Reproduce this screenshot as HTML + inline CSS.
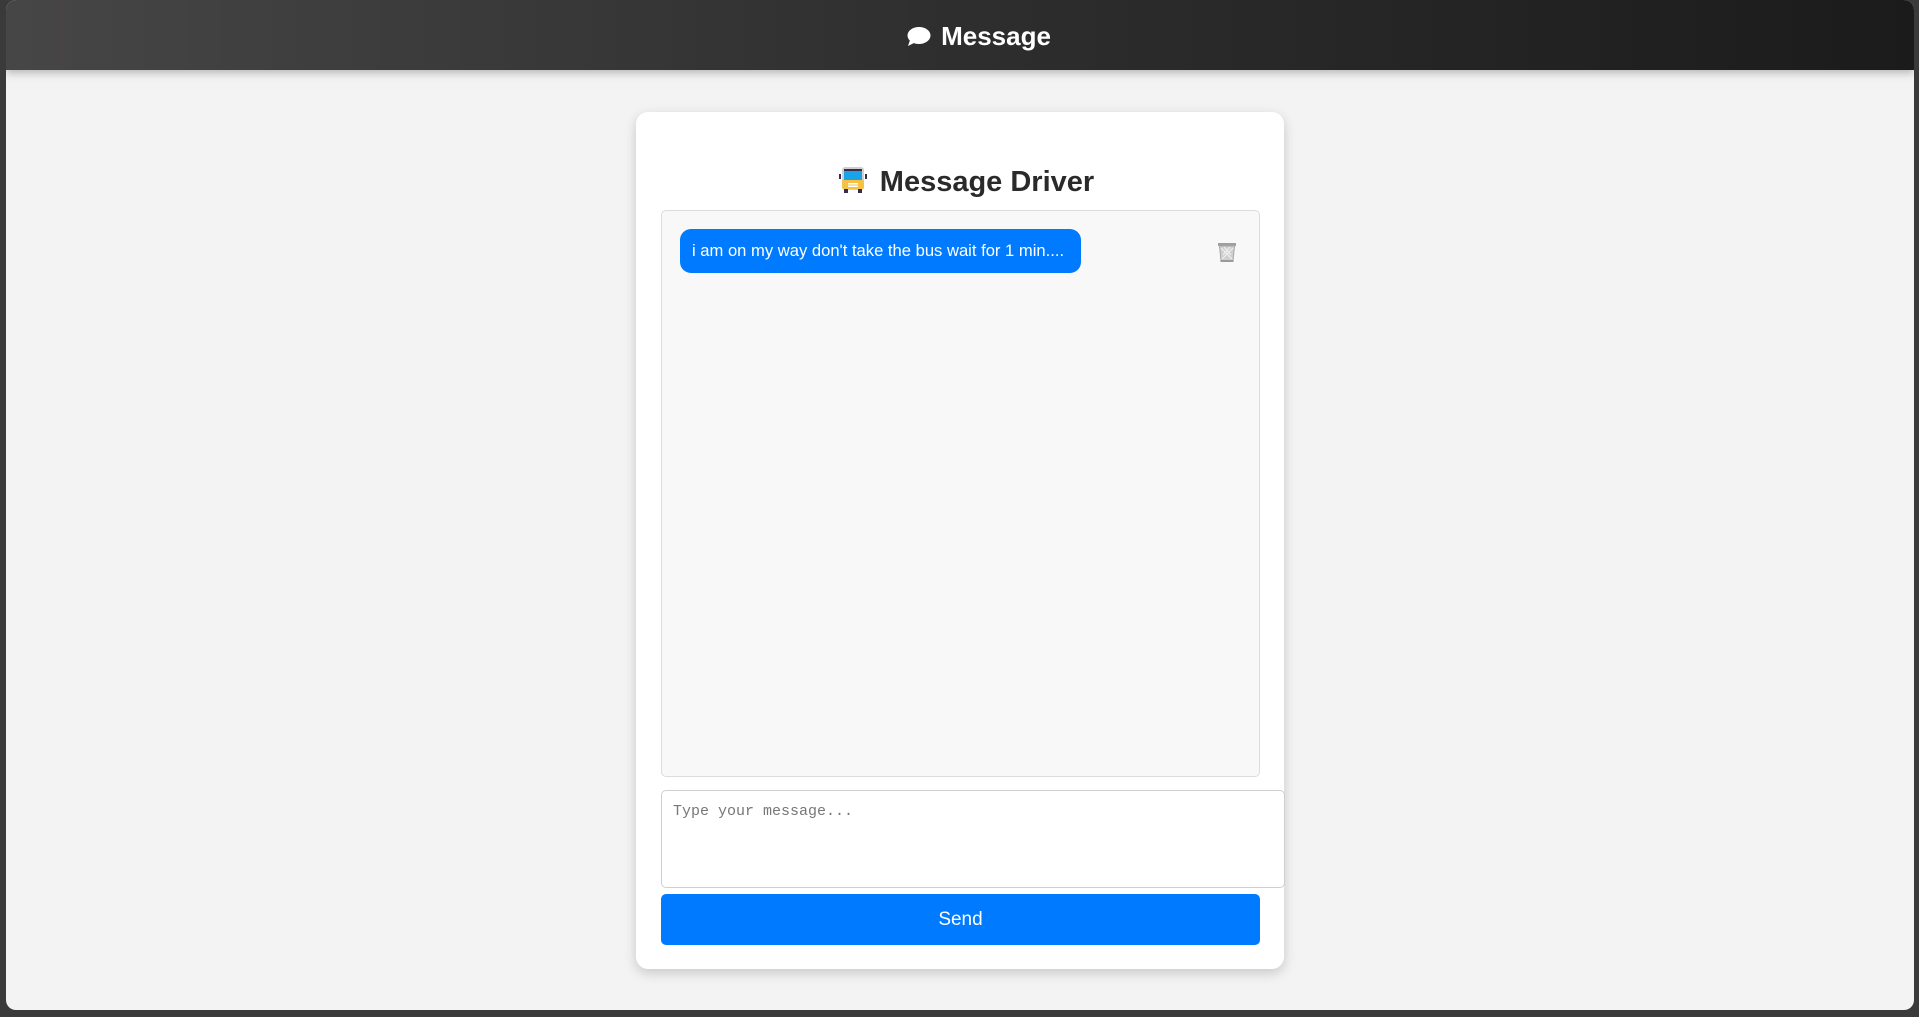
<!DOCTYPE html>
<html><head><meta charset="utf-8"><style>
html,body{margin:0;padding:0;width:1919px;height:1017px;overflow:hidden;background:#3a3a3a;font-family:"Liberation Sans",Arial,sans-serif}
.frame{position:absolute;left:6px;top:0;width:1908px;height:1010px;background:#f3f3f3;border-radius:10px;overflow:hidden}
.hdr{position:absolute;left:0;top:0;width:100%;height:70px;background:linear-gradient(90deg,#474646,#2e2e2e 50%,#1b1b1b);box-shadow:0 3px 8px rgba(0,0,0,.25);color:#fff;font-weight:bold;font-size:26px;text-align:center;line-height:72px;box-sizing:border-box;padding-left:36px}
.card{position:absolute;left:630px;top:112px;width:648px;height:857px;background:#fff;border-radius:12px;box-shadow:0 4px 12px rgba(0,0,0,.18)}
.box{position:absolute;left:25px;top:98px;width:597px;height:565px;border:1px solid #dcdcdc;border-radius:5px;background:#f8f8f8}
.bub{position:absolute;left:18px;top:18px;width:401px;height:44px;background:#007bff;border-radius:11px;color:#fff;font-size:16.6px;line-height:44px;box-sizing:border-box;padding-left:12px;white-space:nowrap}
.ta{position:absolute;left:25px;top:678px;width:624px;height:98px;border:1px solid #cfcfcf;border-radius:5px;background:#fff;font-family:"Liberation Mono",monospace;font-size:15px;color:#777;box-sizing:border-box;padding:12px 11px}
.btn{position:absolute;left:25px;top:782px;width:599px;height:51px;background:#007bff;border-radius:5px;color:#fff;font-size:19px;text-align:center;line-height:51px}
</style></head><body>
<div class="frame">
<div class="hdr"><svg width="26" height="22" viewBox="0 0 26 22" style="vertical-align:-3px;margin-right:10px"><ellipse cx="14" cy="9.5" rx="11.5" ry="8.5" fill="#fff"/><path d="M5 14 L3 20 L11 16 Z" fill="#fff"/></svg>Message</div>
<div class="card">
<div style="position:absolute;left:6px;top:52px;width:100%;text-align:center;font-size:29px;font-weight:bold;color:#2a2a2a;line-height:36px">
<svg width="30" height="28" viewBox="0 0 30 28" style="vertical-align:-3px;margin-right:12px"><rect x="1" y="8" width="2" height="5" fill="#3b2a4a"/><rect x="27" y="8" width="2" height="5" fill="#3b2a4a"/><rect x="4" y="1" width="22" height="23" rx="3" fill="#cfd0d4"/><rect x="6" y="3" width="18" height="2" fill="#3b2a4a"/><rect x="6" y="5" width="18" height="9" fill="#1aa3e8"/><rect x="4" y="14" width="22" height="9" rx="2" fill="#f6c244"/><rect x="10" y="17" width="10" height="1.5" fill="#fff"/><rect x="10" y="19.5" width="10" height="1.5" fill="#fff"/><rect x="6" y="23" width="4" height="4" fill="#3b2a4a"/><rect x="20" y="23" width="4" height="4" fill="#3b2a4a"/></svg>Message Driver</div>
<div class="box">
<div class="bub">i am on my way don't take the bus wait for 1 min....</div>
<svg style="position:absolute;left:556px;top:31px" width="18" height="20" viewBox="0 0 18 20"><rect x="0" y="1" width="18" height="3" fill="#a0a0a0"/><path d="M1.5 4 L3 19 L15 19 L16.5 4 Z" fill="#cfcfcf" stroke="#a8a8a8"/><path d="M3 6 L14 17 M15 6 L4 17 M6 5 L13 13 M12 5 L5 13" stroke="#f2f2f2" stroke-width="1"/><rect x="2.5" y="18" width="13" height="2" fill="#9a9a9a"/></svg>
</div>
<div class="ta">Type your message...</div>
<div class="btn">Send</div>
</div>
</div>
</body></html>
